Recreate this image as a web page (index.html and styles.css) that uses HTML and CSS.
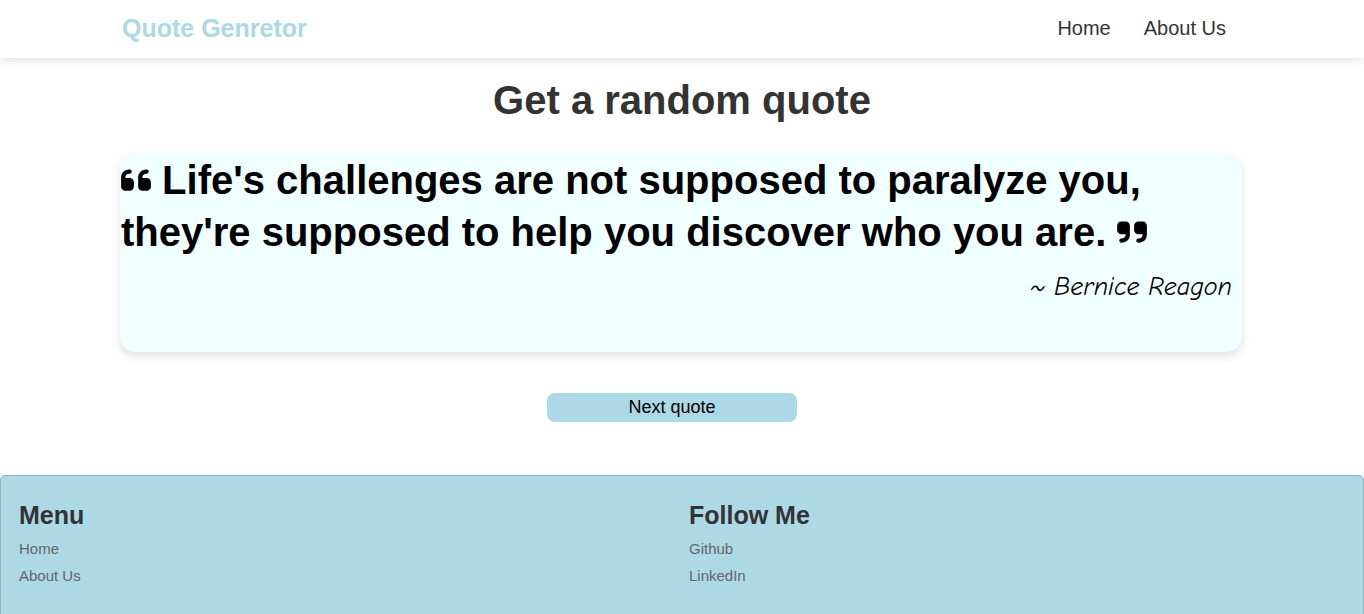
FILE: index.html
```html
<!DOCTYPE html>
<html>
<head>
<meta charset="utf-8">
<title>Quote Genretor</title>
<link rel="stylesheet" href="styles.css">
</head>
<body>
<header class="site-header">
  <div class="container header-inner">
    <a class="logo" href="#">Quote Genretor</a>
    <nav class="nav">
      <a href="#">Home</a>
      <a href="#">About Us</a>
    </nav>
  </div>
</header>
<main class="container main">
  <h1 class="title">Get a random quote</h1>
  <section class="quote-box">
    <p class="quote-text"><svg class="qicon" viewBox="0 0 448 512" width="30" height="34"><path d="M0 216C0 149.7 53.7 96 120 96h8c17.7 0 32 14.3 32 32s-14.3 32-32 32h-8c-30.9 0-56 25.1-56 56v8h64c35.3 0 64 28.7 64 64v64c0 35.3-28.7 64-64 64H64c-35.3 0-64-28.7-64-64V216zm256 0c0-66.300 53.7-120 120-120h8c17.7 0 32 14.3 32 32s-14.3 32-32 32h-8c-30.9 0-56 25.1-56 56v8h64c35.3 0 64 28.7 64 64v64c0 35.3-28.7 64-64 64H320c-35.3 0-64-28.7-64-64V216z"/></svg> Life's challenges are not supposed to paralyze you, they're supposed to help you discover who you are. <svg class="qicon" viewBox="0 0 448 512" width="30" height="34"><path d="M448 296c0 66.3-53.7 120-120 120h-8c-17.7 0-32-14.3-32-32s14.3-32 32-32h8c30.9 0 56-25.1 56-56v-8H320c-35.3 0-64-28.7-64-64V160c0-35.3 28.7-64 64-64h64c35.3 0 64 28.700 64 64v136zm-256 0c0 66.3-53.7 120-120 120H64c-17.7 0-32-14.3-32-32s14.3-32 32-32h8c30.9 0 56-25.1 56-56v-8H64c-35.3 0-64-28.7-64-64V160c0-35.3 28.7-64 64-64h64c35.3 0 64 28.7 64 64v136z"/></svg></p>
    <p class="author">~ Bernice Reagon</p>
  </section>
  <div class="actions">
    <button class="next-btn">Next quote</button>
  </div>
</main>
<footer class="site-footer">
  <div class="footer-col">
    <h2>Menu</h2>
    <a href="#">Home</a>
    <a href="#">About Us</a>
  </div>
  <div class="footer-col">
    <h2>Follow Me</h2>
    <a href="#">Github</a>
    <a href="#">LinkedIn</a>
  </div>
</footer>
</body>
</html>
```
FILE: styles.css
```css
* { box-sizing: border-box; }
html, body { margin: 0; padding: 0; }
body {
  font-family: "Liberation Sans", Arial, sans-serif;
  color: #333;
  background: #fff;
  overflow: hidden;
}
a { text-decoration: none; }
.container {
  width: 1120px;
  margin: 0 auto;
}
.site-header {
  height: 58px;
  background: #fff;
  box-shadow: 0 2px 8px rgba(0,0,0,0.12);
  position: relative;
  z-index: 2;
}
.header-inner {
  height: 58px;
  display: flex;
  align-items: center;
  justify-content: space-between;
  padding: 0 16px 2px 0;
}
.logo {
  color: #add8e6;
  font-weight: bold;
  font-size: 25px;
}
.nav {
  display: flex;
  gap: 33px;
}
.nav a {
  color: #333;
  font-size: 20px;
}
.main {
  padding-top: 20px;
}
.title {
  margin: 0;
  text-align: center;
  font-size: 40px;
  line-height: 45px;
  color: #333;
}
.quote-box {
  margin: 31px 0 0 -2px;
  width: 1122px;
  height: 198px;
  background: #f0ffff;
  border-radius: 15px;
  box-shadow: 0 4px 10px rgba(0,0,0,0.12);
  padding: 0 10px 0 1px;
}
.quote-text {
  margin: 0;
  font-size: 40px;
  line-height: 52px;
  font-weight: bold;
  color: #000;
}
.qicon {
  fill: #000;
  vertical-align: -3px;
}
.author {
  margin: 14px 0 0 0;
  text-align: right;
  font-family: "Comic Sans MS", "Comic Neue", cursive;
  font-style: italic;
  font-size: 26px;
  color: #000;
}
.actions {
  display: flex;
  justify-content: center;
  padding: 41px 0 0 0;
  margin-left: -20px;
}
.next-btn {
  width: 250px;
  height: 29px;
  background: #add8e6;
  border: none;
  border-radius: 8px;
  font-family: "Liberation Sans", Arial, sans-serif;
  font-size: 18px;
  color: #000;
}
.site-footer {
  margin-top: 53px;
  background: #add8e6;
  border: 1px solid #8fb0bc;
  border-radius: 5px;
  height: 160px;
  padding: 22px 18px;
  display: grid;
  grid-template-columns: 656px 656px;
  column-gap: 14px;
}
.footer-col {
  display: flex;
  flex-direction: column;
}
.footer-col h2 {
  margin: 0 0 3px 0;
  font-size: 25px;
  line-height: 34px;
  color: #333;
}
.footer-col a {
  color: #666;
  font-size: 15px;
  line-height: 27px;
}
```
